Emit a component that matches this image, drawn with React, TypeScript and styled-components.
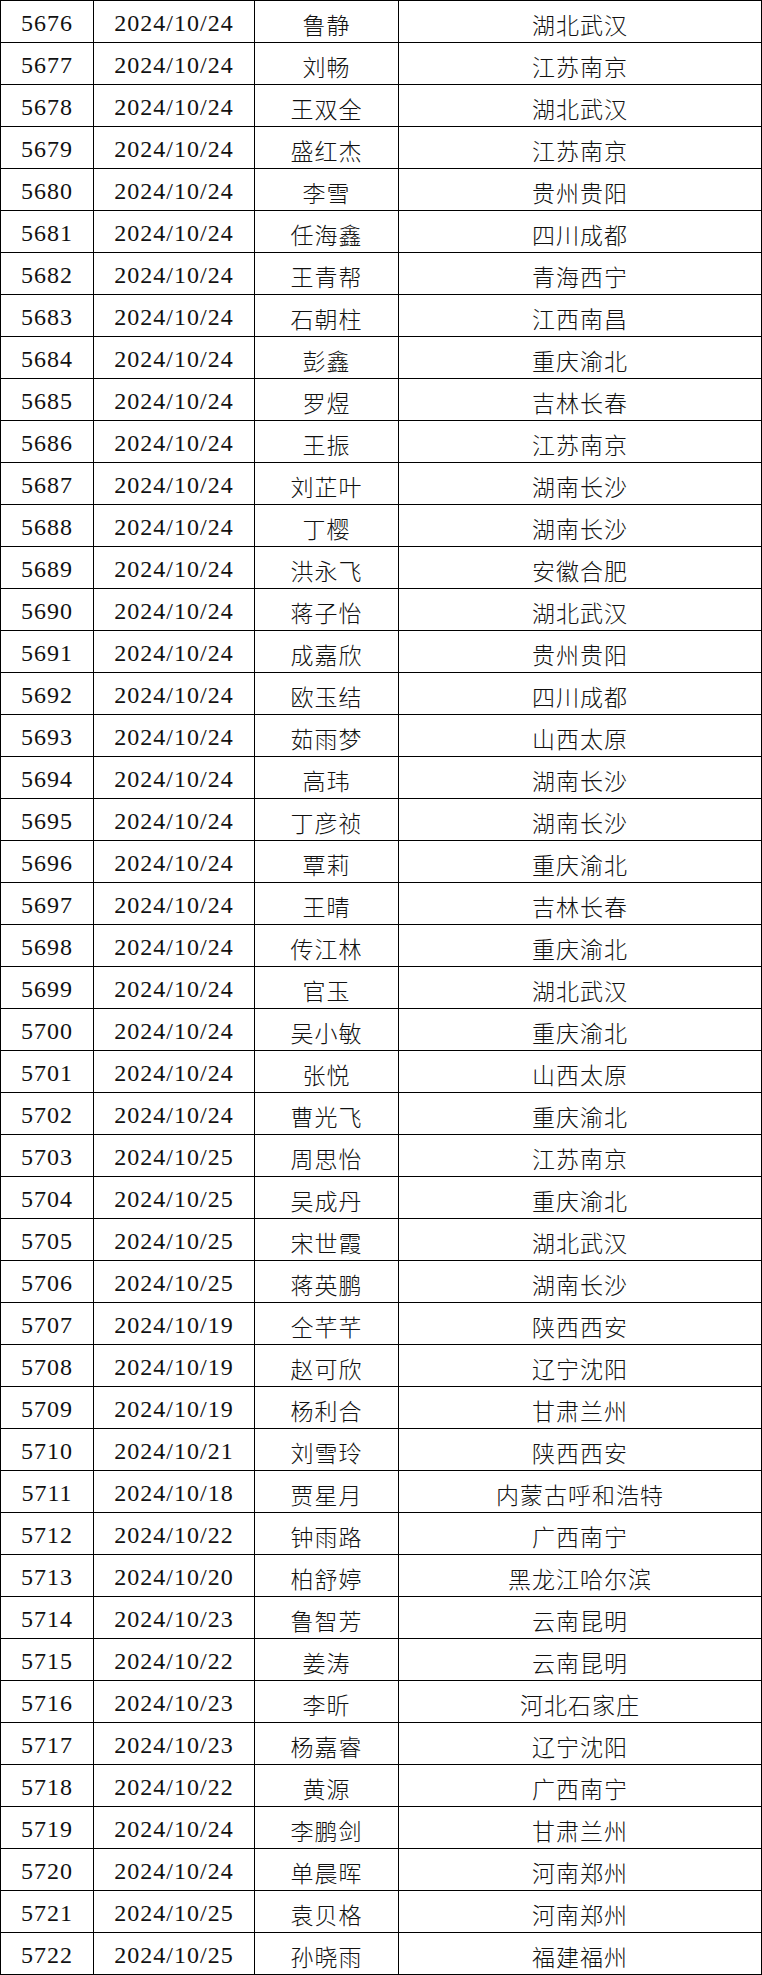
import React from 'react'
import styled, {createGlobalStyle} from 'styled-components'

const GlobalStyle = createGlobalStyle`
  html, body {
    margin: 0;
    padding: 0;
    background: #fff;
  }
`;

const Table = styled.div`
  display: grid;
  grid-template-columns: 93px 161px 144px 363px;
  grid-auto-rows: 42px;
  width: 761px;
  border-top: 1px solid #000;
  border-left: 1px solid #000;
  background: #fff;
  color: #111;
`;

const Cell = styled.div<{$cjk?: boolean}>`
  display: flex;
  align-items: center;
  justify-content: center;
  box-sizing: border-box;
  padding-top: 4px;
  border-right: 1px solid #000;
  border-bottom: 1px solid #000;
  white-space: nowrap;
  font-family: ${p => p.$cjk
    ? '"Noto Sans CJK SC", sans-serif'
    : '"Liberation Serif", "Noto Sans CJK SC", serif'};
  font-size: ${p => p.$cjk ? '23px' : '24px'};
  letter-spacing: 1px;
  font-weight: ${p => p.$cjk ? 300 : 400};
`;

const rows: [string, string, string][] = [
  ['2024/10/24', '鲁静', '湖北武汉'],
  ['2024/10/24', '刘畅', '江苏南京'],
  ['2024/10/24', '王双全', '湖北武汉'],
  ['2024/10/24', '盛红杰', '江苏南京'],
  ['2024/10/24', '李雪', '贵州贵阳'],
  ['2024/10/24', '任海鑫', '四川成都'],
  ['2024/10/24', '王青帮', '青海西宁'],
  ['2024/10/24', '石朝柱', '江西南昌'],
  ['2024/10/24', '彭鑫', '重庆渝北'],
  ['2024/10/24', '罗煜', '吉林长春'],
  ['2024/10/24', '王振', '江苏南京'],
  ['2024/10/24', '刘芷叶', '湖南长沙'],
  ['2024/10/24', '丁樱', '湖南长沙'],
  ['2024/10/24', '洪永飞', '安徽合肥'],
  ['2024/10/24', '蒋子怡', '湖北武汉'],
  ['2024/10/24', '成嘉欣', '贵州贵阳'],
  ['2024/10/24', '欧玉结', '四川成都'],
  ['2024/10/24', '茹雨梦', '山西太原'],
  ['2024/10/24', '高玮', '湖南长沙'],
  ['2024/10/24', '丁彦祯', '湖南长沙'],
  ['2024/10/24', '覃莉', '重庆渝北'],
  ['2024/10/24', '王晴', '吉林长春'],
  ['2024/10/24', '传江林', '重庆渝北'],
  ['2024/10/24', '官玉', '湖北武汉'],
  ['2024/10/24', '吴小敏', '重庆渝北'],
  ['2024/10/24', '张悦', '山西太原'],
  ['2024/10/24', '曹光飞', '重庆渝北'],
  ['2024/10/25', '周思怡', '江苏南京'],
  ['2024/10/25', '吴成丹', '重庆渝北'],
  ['2024/10/25', '宋世霞', '湖北武汉'],
  ['2024/10/25', '蒋英鹏', '湖南长沙'],
  ['2024/10/19', '仝芊芊', '陕西西安'],
  ['2024/10/19', '赵可欣', '辽宁沈阳'],
  ['2024/10/19', '杨利合', '甘肃兰州'],
  ['2024/10/21', '刘雪玲', '陕西西安'],
  ['2024/10/18', '贾星月', '内蒙古呼和浩特'],
  ['2024/10/22', '钟雨路', '广西南宁'],
  ['2024/10/20', '柏舒婷', '黑龙江哈尔滨'],
  ['2024/10/23', '鲁智芳', '云南昆明'],
  ['2024/10/22', '姜涛', '云南昆明'],
  ['2024/10/23', '李昕', '河北石家庄'],
  ['2024/10/23', '杨嘉睿', '辽宁沈阳'],
  ['2024/10/22', '黄源', '广西南宁'],
  ['2024/10/24', '李鹏剑', '甘肃兰州'],
  ['2024/10/24', '单晨晖', '河南郑州'],
  ['2024/10/25', '袁贝格', '河南郑州'],
  ['2024/10/25', '孙晓雨', '福建福州'],
];

export default function App() {
  return (
    <>
      <GlobalStyle/>
      <Table>
        {rows.map(([date, name, place], i) => (
          <React.Fragment key={i}>
            <Cell>{5676 + i}</Cell>
            <Cell>{date}</Cell>
            <Cell $cjk>{name}</Cell>
            <Cell $cjk>{place}</Cell>
          </React.Fragment>
        ))}
      </Table>
    </>
  );
}
